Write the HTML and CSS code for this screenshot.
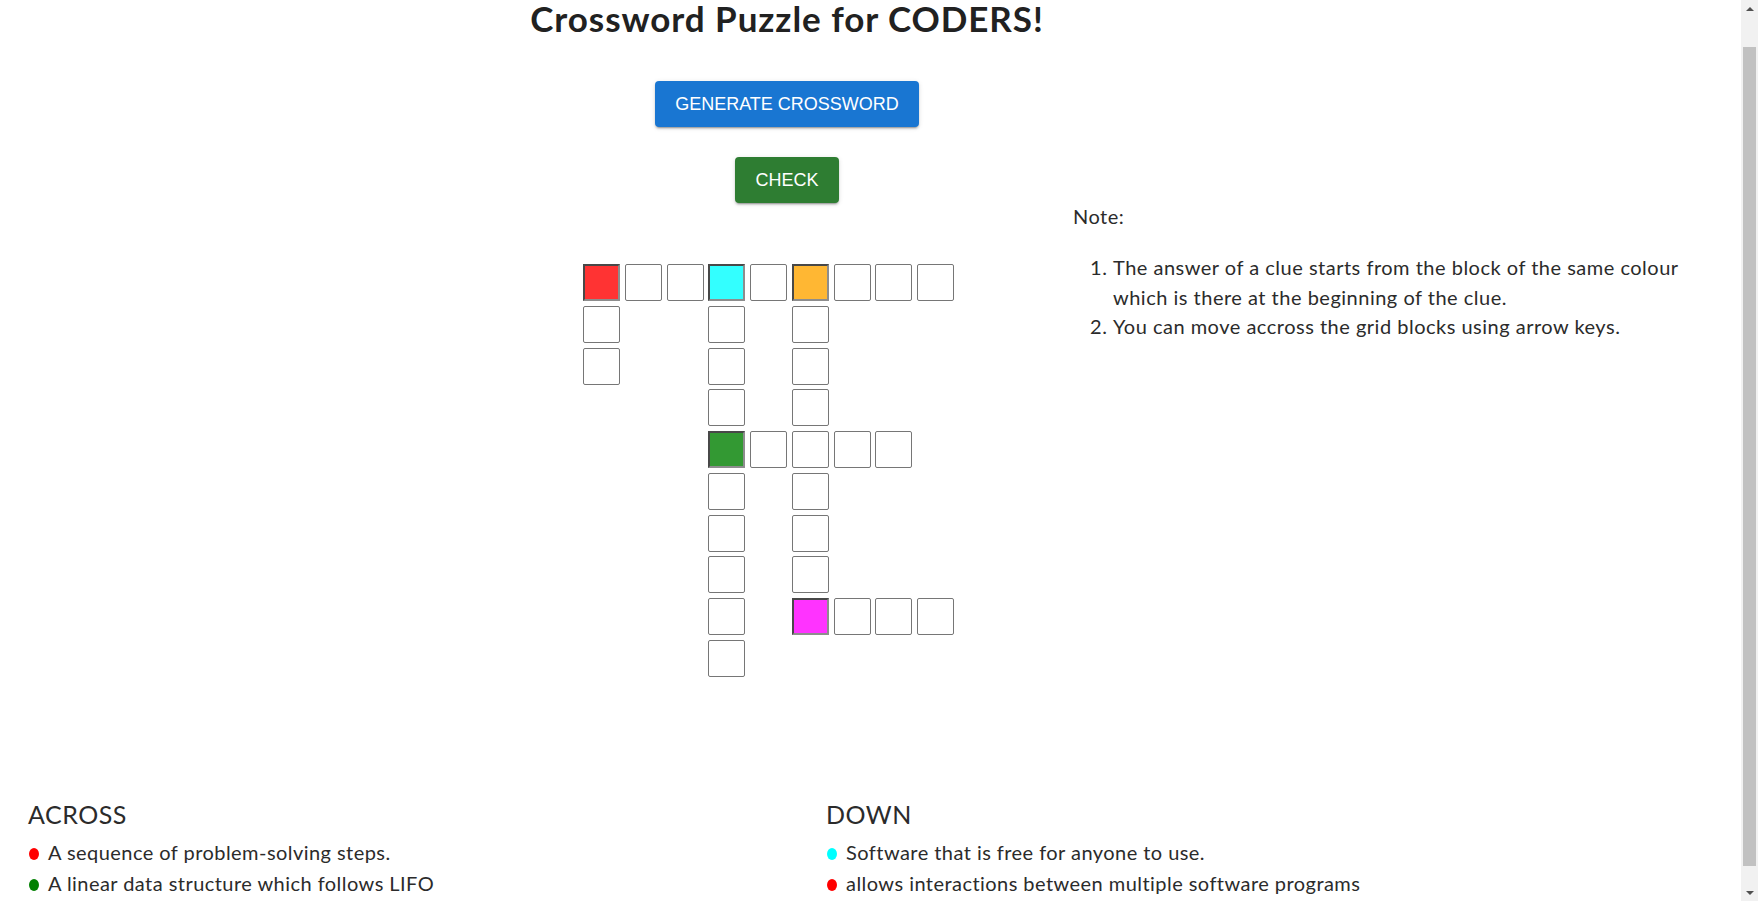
FILE: index.html
```html
<!DOCTYPE html>
<html lang="en">
<head>
<meta charset="utf-8">
<title>Crossword Puzzle for CODERS!</title>
<link rel="stylesheet" href="styles.css">
</head>
<body>
<header class="head">
  <h1 class="title">Crossword Puzzle for CODERS!</h1>
  <button class="btn btn-generate" type="button">Generate Crossword</button>
  <button class="btn btn-check" type="button">Check</button>
</header>

<section class="main">
  <div class="board">
    <input class="cell red" maxlength="1"><input class="cell" maxlength="1"><input class="cell" maxlength="1"><input class="cell cyan" maxlength="1"><input class="cell" maxlength="1"><input class="cell orange" maxlength="1"><input class="cell" maxlength="1"><input class="cell" maxlength="1"><input class="cell" maxlength="1">

    <input class="cell" maxlength="1"><span class="blank"></span><span class="blank"></span><input class="cell" maxlength="1"><span class="blank"></span><input class="cell" maxlength="1"><span class="blank"></span><span class="blank"></span><span class="blank"></span>

    <input class="cell" maxlength="1"><span class="blank"></span><span class="blank"></span><input class="cell" maxlength="1"><span class="blank"></span><input class="cell" maxlength="1"><span class="blank"></span><span class="blank"></span><span class="blank"></span>

    <span class="blank"></span><span class="blank"></span><span class="blank"></span><input class="cell" maxlength="1"><span class="blank"></span><input class="cell" maxlength="1"><span class="blank"></span><span class="blank"></span><span class="blank"></span>

    <span class="blank"></span><span class="blank"></span><span class="blank"></span><input class="cell green" maxlength="1"><input class="cell" maxlength="1"><input class="cell" maxlength="1"><input class="cell" maxlength="1"><input class="cell" maxlength="1"><span class="blank"></span>

    <span class="blank"></span><span class="blank"></span><span class="blank"></span><input class="cell" maxlength="1"><span class="blank"></span><input class="cell" maxlength="1"><span class="blank"></span><span class="blank"></span><span class="blank"></span>

    <span class="blank"></span><span class="blank"></span><span class="blank"></span><input class="cell" maxlength="1"><span class="blank"></span><input class="cell" maxlength="1"><span class="blank"></span><span class="blank"></span><span class="blank"></span>

    <span class="blank"></span><span class="blank"></span><span class="blank"></span><input class="cell" maxlength="1"><span class="blank"></span><input class="cell" maxlength="1"><span class="blank"></span><span class="blank"></span><span class="blank"></span>

    <span class="blank"></span><span class="blank"></span><span class="blank"></span><input class="cell" maxlength="1"><span class="blank"></span><input class="cell magenta" maxlength="1"><input class="cell" maxlength="1"><input class="cell" maxlength="1"><input class="cell" maxlength="1">

    <span class="blank"></span><span class="blank"></span><span class="blank"></span><input class="cell" maxlength="1">
  </div>

  <aside class="note">
    <p>Note:</p>
    <ol>
      <li>The answer of a clue starts from the block of the same colour which is there at the beginning of the clue.</li>
      <li>You can move accross the grid blocks using arrow keys.</li>
    </ol>
  </aside>
</section>

<section class="clues">
  <div class="clue-col">
    <h2>ACROSS</h2>
    <ul>
      <li><span class="dot dot-red"></span>A sequence of problem-solving steps.</li>
      <li><span class="dot dot-green"></span>A linear data structure which follows LIFO</li>
    </ul>
  </div>
  <div class="clue-col">
    <h2>DOWN</h2>
    <ul>
      <li><span class="dot dot-cyan"></span>Software that is free for anyone to use.</li>
      <li><span class="dot dot-red"></span>allows interactions between multiple software programs</li>
    </ul>
  </div>
</section>

<div class="scrollbar" aria-hidden="true">
  <span class="sb-btn sb-up"></span>
  <span class="sb-thumb"></span>
  <span class="sb-fill"></span>
  <span class="sb-btn sb-down"></span>
</div>
</body>
</html>
```

FILE: styles.css
```css
html, body {
  margin: 0;
  padding: 0;
}

body {
  font-family: Lato, "Open Sans", sans-serif;
  color: #2b2b2b;
  background: #fff;
}

.head {
  width: 1574px;
  display: flex;
  flex-direction: column;
  align-items: center;
}

.title {
  margin: 0;
  font-size: 35px;
  line-height: 37px;
  font-weight: 700;
  letter-spacing: 0.95px;
  color: #212121;
}

.btn {
  font-family: "Liberation Sans", Arial, sans-serif;
  font-size: 18px;
  line-height: 32px;
  padding: 7px 20px;
  color: #fff;
  border: 0;
  border-radius: 4px;
  text-transform: uppercase;
  cursor: pointer;
  box-shadow: 0 3px 1px -2px rgba(0, 0, 0, 0.2), 0 2px 2px 0 rgba(0, 0, 0, 0.14), 0 1px 5px 0 rgba(0, 0, 0, 0.12);
}

.btn-generate {
  margin-top: 44px;
  background: #1976d2;
}

.btn-check {
  margin-top: 30px;
  padding: 7px 20.5px;
  background: #2e7d32;
}

.main {
  display: flex;
  align-items: flex-start;
  padding-left: 583px;
}

.board {
  margin-top: 61px;
  display: grid;
  grid-template-columns: repeat(9, 37px);
  grid-auto-rows: 37px;
  gap: 4.75px;
}

.cell {
  -webkit-appearance: none;
  appearance: none;
  width: 37px;
  height: 37px;
  box-sizing: border-box;
  margin: 0;
  padding: 0;
  border: 1px solid #767676;
  border-radius: 2px;
  background: #fff;
  text-align: center;
  font-family: Lato, sans-serif;
  font-size: 20px;
}

.cell.red,
.cell.cyan,
.cell.orange,
.cell.green,
.cell.magenta {
  border-width: 2px;
  border-radius: 0;
  border-color: #484848 #8d8d8d #8d8d8d #484848;
}

.cell.red { background: rgba(255, 0, 0, 0.8); }
.cell.cyan { background: rgba(0, 255, 255, 0.8); }
.cell.orange { background: rgba(255, 165, 0, 0.8); }
.cell.green { background: rgba(0, 128, 0, 0.8); }
.cell.magenta { background: rgba(255, 0, 255, 0.8); }

.note {
  margin-left: 119px;
  width: 627px;
  font-size: 20px;
  line-height: 29.5px;
  letter-spacing: 0.5px;
}

.note p {
  margin: 0;
  line-height: 26px;
}

.note ol {
  margin: 24px 0 0;
  padding-left: 40px;
}

.clues {
  display: grid;
  grid-template-columns: 798px 798px;
  padding: 0 0 40px 28px;
  margin-top: 122px;
}

.clues h2 {
  margin: 0;
  font-size: 25px;
  line-height: 30px;
  font-weight: 400;
  letter-spacing: 0.5px;
}

.clues ul {
  list-style: none;
  margin: 8px 0 0;
  padding: 0;
}

.clues li {
  font-size: 20px;
  line-height: 31px;
  letter-spacing: 0.45px;
}

.dot {
  display: inline-block;
  vertical-align: middle;
  width: 10px;
  height: 12px;
  border-radius: 50%;
  margin: -2px 9px 0 1px;
}

.dot-red { background: #f00; }
.dot-green { background: #008000; }
.dot-cyan { background: #0ff; }

.scrollbar {
  position: fixed;
  top: 0;
  right: 0;
  width: 17px;
  height: 100vh;
  background: #f1f1f1;
  display: flex;
  flex-direction: column;
  align-items: center;
}

.sb-btn {
  width: 17px;
  height: 17px;
  display: flex;
  align-items: center;
  justify-content: center;
}

.sb-btn::before {
  content: "";
  width: 0;
  height: 0;
  border-left: 4px solid transparent;
  border-right: 4px solid transparent;
}

.sb-up::before {
  border-bottom: 4px solid #505050;
}

.sb-down::before {
  border-top: 4px solid #505050;
}

.sb-thumb {
  margin-top: 30px;
  width: 13px;
  height: 819px;
  background: #c1c1c1;
}

.sb-fill {
  flex: 1;
}
```
